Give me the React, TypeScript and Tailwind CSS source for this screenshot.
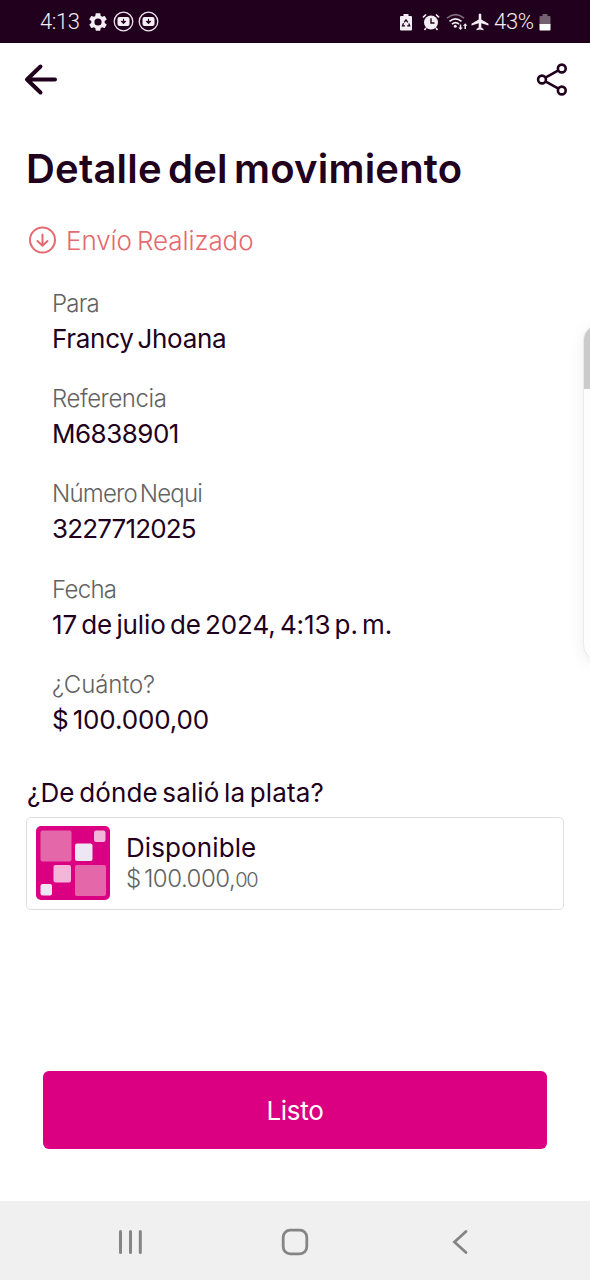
import React from "react";

type Detail = { label: string; value: string; labelClass: string; valueClass: string };

const details: Detail[] = [
  { label: "Para", value: "Francy Jhoana", labelClass: "tracking-[-0.8px]", valueClass: "tracking-[-0.3px]" },
  { label: "Referencia", value: "M6838901", labelClass: "tracking-[-0.45px]", valueClass: "tracking-[-0.5px]" },
  { label: "Número Nequi", value: "3227712025", labelClass: "tracking-[-0.8px]", valueClass: "tracking-[-0.85px]" },
  { label: "Fecha", value: "17 de julio de 2024, 4:13 p. m.", labelClass: "tracking-[-0.7px]", valueClass: "tracking-[-0.1px]" },
  { label: "¿Cuánto?", value: "$ 100.000,00", labelClass: "tracking-[-0.15px]", valueClass: "tracking-[-0.15px]" },
];

const DownloadBadge = () => (
  <svg className="h-[21px] w-[21px]" viewBox="0 0 21 21" fill="none">
    <circle cx="10.5" cy="10.5" r="9.3" stroke="#eee5ef" strokeWidth="1.3" />
    <rect x="4.5" y="6" width="12" height="9" rx="2" fill="#f3edf4" />
    <path d="M10.500 7.800v4M8.200 10.300l2.300 2.500 2.300-2.500z" stroke="#21001d" strokeWidth="1" fill="#21001d" />
  </svg>
);

const StatusBar = () => (
  <div className="flex h-[43px] shrink-0 items-center bg-[#21001d] pl-10 pr-[39px] text-[#f3edf4]">
    <span className="w-[42px] whitespace-nowrap font-[Roboto] text-[22px] font-[350] leading-[43px] tracking-[-0.4px]">4:13</span>
    {/* Settings */}
    <svg className="ml-[7px] h-[18px] w-[18px]" viewBox="2 2 20 20" fill="currentColor">
      <path
        fillRule="evenodd"
        d="M19.4 13c.1-.7.1-1.300 0-2l2-1.600c.2-.1.2-.4.100-.6l-1.900-3.300c-.1-.2-.4-.3-.6-.2l-2.400 1c-.5-.4-1-.7-1.600-.9l-.4-2.600c0-.2-.2-.4-.5-.4H9.900c-.2 0-.4.200-.5.400L9 5.300c-.6.300-1.100.600-1.600 1L5 5.300c-.2-.1-.5 0-.6.200L2.500 8.800c-.1.200-.1.500.1.600l2 1.600c-.1.700-.1 1.300 0 2l-2 1.600c-.2.100-.2.400-.1.600l1.900 3.300c.1.200.4.300.6.200l2.400-1c.5.400 1 .7 1.600 1l.4 2.500c.1.300.3.500.5.500h4.200c.3 0 .5-.2.500-.5l.4-2.500c.6-.3 1.100-.6 1.600-1l2.400 1c.2.100.5 0 .6-.2l1.900-3.300c.1-.2.100-.5-.1-.6zM12 16a4 4 0 1 1 0-8 4 4 0 0 1 0 8z"
      />
    </svg>
    <div className="ml-[6px] flex gap-[4px]">
      <DownloadBadge />
      <DownloadBadge />
    </div>

    {/* Battery saver, alarm, wifi, plane mode */}
    <svg className="ml-auto h-[18px] w-[12px]" viewBox="0 0 12 18">
      <path d="M3.500 1h5v2h2.500q1 0 1 1v12.500q0 1-1 1H1q-1 0-1-1V4q0-1 1-1h2.500z" fill="#f3edf4" />
      <path d="M4.200 9.300L6 6.800l1.800 2.500M8.700 10.500l1 2.300H7.200M5 12.800H2.500l1-2.500" fill="none" stroke="#21001d" strokeWidth="1.300" />
    </svg>
    <svg className="ml-[10px] h-[18px] w-[18px]" viewBox="0 0 18 18" fill="none">
      <circle cx="9" cy="9.500" r="7" fill="#f3edf4" />
      <path d="M9 5.200v4.800h3.500" stroke="#21001d" strokeWidth="1.400" />
      <path d="M1 4.300L4 1.500M17 4.300L14 1.500M4 15l-1.500 2M14 15l1.500 2" stroke="#f3edf4" strokeWidth="1.600" />
    </svg>
    <svg className="ml-[6px] h-[18px] w-[22px]" viewBox="0 0 22 18" fill="none">
      <path d="M1 5.200q8.500-7 17 0" stroke="#816a7e" strokeWidth="1.600" />
      <path d="M3.500 8.300q6-5 12 0M6 11.200q3.500-3 7 0" stroke="#f3edf4" strokeWidth="1.700" />
      <circle cx="9.300" cy="13.300" r="1.500" fill="#f3edf4" />
      <path d="M14.500 11.500v4M19.200 16v-4" stroke="#f3edf4" strokeWidth="1.500" />
      <path d="M12.300 14.500h4.400L14.500 17zM17 12.800h4.400l-2.200-2.600z" fill="#f3edf4" />
    </svg>
    <svg className="ml-[3px] h-[18px] w-[18px]" viewBox="0 0 18 18" fill="currentColor">
      <path d="M9 .5c.9 0 1.300.8 1.300 1.700v4.300l7.200 4.300v1.700l-7.200-2.200v4.200l2.200 1.600v1.200L9 16.500l-3.500.8v-1.200l2.200-1.600v-4.200L.5 12.500v-1.700l7.200-4.300V2.200C7.700 1.300 8.100.5 9 .5z" />
    </svg>
    <span className="ml-[5px] w-[45px] whitespace-nowrap font-[Roboto] text-[22px] font-[350] leading-[43px] tracking-[-0.3px]">43%</span>
    <svg className="h-[18px] w-[12px]" viewBox="0 0 12 18">
      <path d="M3.500 1h5v2h2q1 0 1 1v8H.5V4q0-1 1-1h2z" fill="#756071" />
      <path d="M.5 11h11v5.500q0 1-1 1h-9q-1 0-1-1z" fill="#fff" />
    </svg>
  </div>
);

const Header = () => (
  <header className="flex h-[73px] shrink-0 items-center justify-between pl-6 pr-[22px] text-[#21001d]">
    <svg className="h-[34px] w-[34px]" viewBox="0 0 34 34" fill="none" stroke="currentColor" strokeWidth="4" strokeLinecap="round" strokeLinejoin="round">
      <path d="M31 16.500H3M16.500 3.500L3 16.500l13.500 13" />
    </svg>
    <svg className="h-[34px] w-[32px]" viewBox="0 0 32 34" fill="none" stroke="currentColor" strokeWidth="2.600">
      <circle cx="6" cy="16.500" r="3.900" />
      <circle cx="25.800" cy="5.500" r="3.900" />
      <circle cx="25.800" cy="27.500" r="3.900" />
      <path d="M9.400 14.600l13-7.200M9.400 18.400l13 7.200" />
    </svg>
  </header>
);

const AccountCard = () => (
  <div className="ml-[26px] mt-[4px] flex h-[93px] w-[538px] items-center rounded-[5px] border border-[#dedede] pl-[9px]">
    <svg className="h-[74px] w-[74px]" viewBox="0 0 74 74">
      <rect width="74" height="74" rx="5" fill="#da0081" />
      <rect x="4.500" y="4.500" width="31" height="31" rx="2" fill="#e467a9" />
      <rect x="39" y="39" width="31" height="31" rx="2" fill="#e467a9" />
      <rect x="58" y="4.500" width="11.500" height="11.500" rx="2" fill="#f3b5d8" />
      <rect x="17.500" y="39" width="17.500" height="17.500" rx="2" fill="#f3b5d8" />
      <rect x="39" y="17.500" width="17.500" height="17.500" rx="2" fill="#efe6f4" />
      <rect x="4.500" y="58" width="11.500" height="11.500" rx="2" fill="#efe6f4" />
    </svg>
    <div className="ml-4 flex flex-col whitespace-nowrap pt-[2px]">
      <span className="text-[26px] leading-[31px] tracking-[0.1px] text-[#21001d]">Disponible</span>
      <span className="text-[24px] font-light leading-[31px] tracking-[-0.5px] text-[#626262] [word-spacing:-3px]">
        $ 100.000,<span className="text-[20px] tracking-[-1.2px]">00</span>
      </span>
    </div>
  </div>
);

const NavigationBar = () => (
  <nav className="mt-auto flex h-[79px] shrink-0 items-center justify-between bg-[#f0f0f0] pl-[117px] pr-[121px] pt-[3px] text-[#858585]">
    <svg className="h-[26px] w-[26px]" viewBox="0 0 26 26" fill="none" stroke="currentColor" strokeWidth="3" strokeLinecap="round">
      <path d="M3.500 2.500v21M13.500 2.500v21M23.300 2.500v21" />
    </svg>
    <svg className="mr-[4px] h-[28px] w-[28px]" viewBox="0 0 28 28" fill="none" stroke="currentColor" strokeWidth="2.800">
      <rect x="2.200" y="2.200" width="23.600" height="23.600" rx="7" />
    </svg>
    <svg className="h-[26px] w-[18px]" viewBox="0 0 18 26" fill="none" stroke="currentColor" strokeWidth="2.800" strokeLinecap="round">
      <path d="M15 2.500L3.500 13 15 23.500" />
    </svg>
  </nav>
);

// Samsung edge panel peeking in from the right side
const EdgePanel = () => (
  <div className="absolute left-[583px] top-[324px] h-[337px] w-8 overflow-hidden rounded-[20px] border border-[#ebebeb] bg-[#fdfdfd] shadow-[0_3px_16px_rgba(0,0,0,0.07)]">
    <div className="h-[64px] bg-[#cbcbcb]" />
  </div>
);

const App = () => {
  return (
    <div className="relative flex h-[1280px] w-[590px] flex-col overflow-hidden bg-white font-[Inter,sans-serif] text-[#21001d]">
      <StatusBar />
      <Header />

      <main className="flex flex-col">
        <h1 className="ml-[26px] mt-[29px] whitespace-nowrap text-[40px] font-semibold leading-[48px] tracking-[0.2px] [word-spacing:-4px]">
          Detalle del movimiento
        </h1>

        <div className="ml-[28px] mt-[27px] flex h-10 items-center text-[#e5696e]">
          <svg className="h-[28px] w-[28px]" viewBox="0 0 28 28" fill="none" stroke="currentColor" strokeWidth="2" strokeLinecap="round" strokeLinejoin="round">
            <circle cx="14.500" cy="14" r="12.500" />
            <path d="M14.500 8.500v11M9.500 15l5 4.700 5-4.700" />
          </svg>
          <span className="ml-[10px] whitespace-nowrap text-[26px] font-[350] tracking-[-0.1px] [word-spacing:-2px]">Envío Realizado</span>
        </div>

        <dl className="ml-[52px] mt-[28px] flex flex-col gap-[25.200px]">
          {details.map((d) => (
            <div key={d.label} className="flex h-[70px] flex-col whitespace-nowrap [word-spacing:-3px]">
              <dt className="text-[24px] font-[330] leading-[32px] text-[#626262]">
                <span className={d.labelClass}>{d.label}</span>
              </dt>
              <dd className="text-[26px] font-[370] leading-[38px]">
                <span className={d.valueClass}>{d.value}</span>
              </dd>
            </div>
          ))}
        </dl>

        <h2 className="ml-[27px] mt-[34px] whitespace-nowrap text-[26px] font-[370] leading-[40px] tracking-[0.15px] [word-spacing:-3px]">
          ¿De dónde salió la plata?
        </h2>
        <AccountCard />

        <button className="ml-[43px] mt-[161px] h-[78px] w-[504px] rounded-[6px] bg-[#da0081] pt-[2px] text-[26px] font-[370] tracking-[-0.3px] text-white">
          Listo
        </button>
      </main>

      <NavigationBar />
      <EdgePanel />
    </div>
  );
};

export default App;
